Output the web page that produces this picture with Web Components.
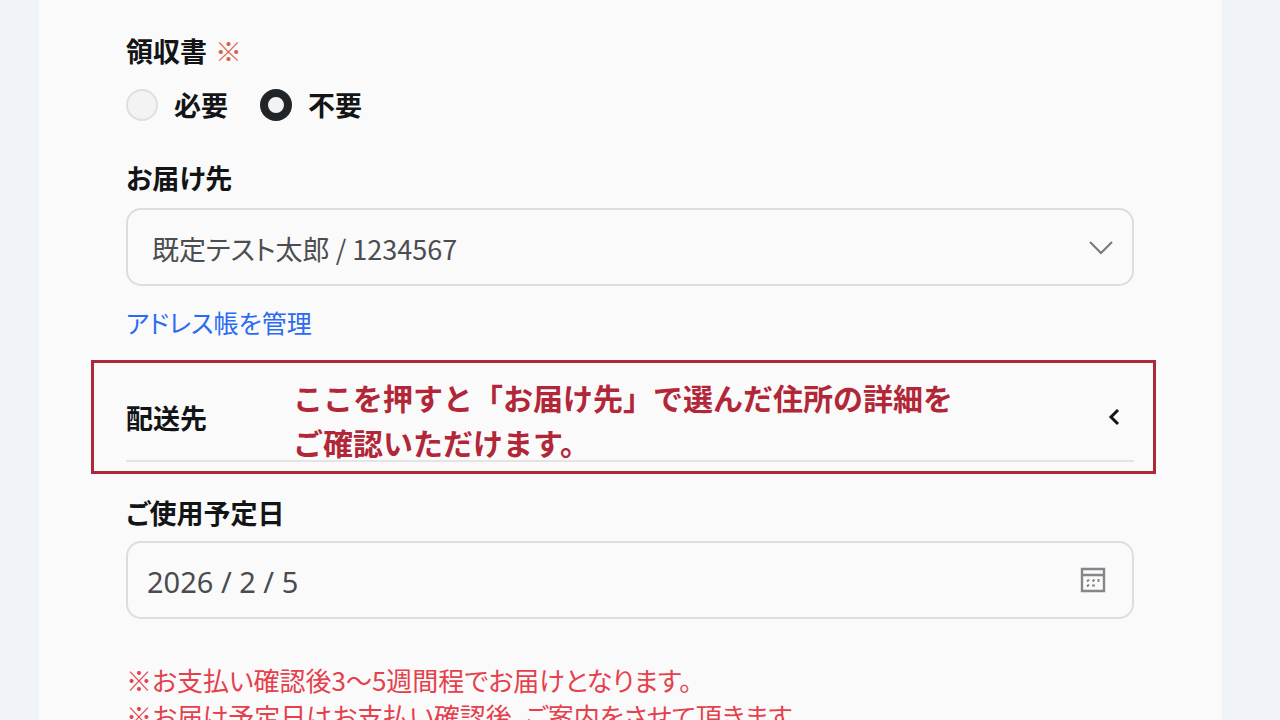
<!DOCTYPE html>
<html lang="ja">
<head>
<meta charset="utf-8">
<meta name="viewport" content="width=device-width, initial-scale=1">
<title>ご注文情報</title>
<style>
  body {
    margin: 0;
    background: #f0f4f9;
    color: #131416;
    font: 400 27px/36px "Noto Sans CJK JP", sans-serif;
    font-feature-settings: "palt";
  }
</style>
</head>
<body>
<order-form></order-form>

<script>
const define = (name, html) => {
  const template = document.createElement('template');
  template.innerHTML = html;
  customElements.define(name, class extends HTMLElement {
    constructor() {
      super();
      this.attachShadow({ mode: 'open' }).append(template.content.cloneNode(true));
    }
  });
};

define('radio-group', `
  <style>
    :host { display: block; }
    fieldset { margin: 0; padding: 0; border: 0; min-width: 0; }
    legend { padding: 0; font-weight: 700; line-height: 40px; }
    .mark { color: #d9604f; font-weight: 400; margin-left: 8px; }
    .options { display: flex; gap: 32px; margin-top: 18px; }
    label { display: flex; align-items: center; gap: 16px; height: 32px; font-weight: 700; }
    input {
      appearance: none; box-sizing: border-box; margin: 0;
      width: 32px; height: 32px; border-radius: 50%;
      border: 2px solid #dedfe1; background: #f3f3f3;
    }
    input:checked { border: 8px solid #222528; }
  </style>
  <fieldset>
    <legend>領収書<span class="mark">※</span></legend>
    <div class="options">
      <label><input type="radio" name="receipt" value="yes"><span>必要</span></label>
      <label><input type="radio" name="receipt" value="no" checked><span>不要</span></label>
    </div>
  </fieldset>
`);

define('address-select', `
  <style>
    :host { display: block; }
    label { display: block; font-weight: 700; line-height: 40px; }
    .box { display: grid; align-items: center; margin-top: 10px; }
    select, svg { grid-area: 1 / 1; }
    select {
      appearance: none; box-sizing: border-box; width: 100%; height: 78px;
      padding: 4px 72px 0 24px; border: 2px solid #dcdde0; border-radius: 15px;
      background: transparent; color: #4c4d50; font: inherit;
      font-feature-settings: inherit;
    }
    svg { justify-self: end; margin-right: 21px; pointer-events: none; }
    a {
      display: block; width: fit-content; margin-top: 16px;
      font-size: 25px; line-height: 40px; color: #2b6bf3; text-decoration: none;
    }
  </style>
  <label for="address">お届け先</label>
  <div class="box">
    <select id="address"><option>既定テスト太郎 / 1234567</option></select>
    <svg width="24" height="16" viewBox="0 0 24 16" fill="none" stroke="#77777c" stroke-width="2"><path d="M1 3 12 14 23 3"/></svg>
  </div>
  <a href="#address-book">アドレス帳を管理</a>
`);

define('detail-row', `
  <style>
    :host { display: block; position: relative; }
    button {
      box-sizing: border-box; width: 100%; height: 86px; margin: 0; padding: 0 13px 0 0;
      display: flex; align-items: center; justify-content: space-between;
      border: 0; border-bottom: 2px solid #e4e4e5; background: none;
      color: inherit; font: inherit; font-weight: 700; font-feature-settings: inherit;
    }
  </style>
  <button type="button" aria-expanded="false">
    <slot></slot>
    <svg width="14" height="18" viewBox="0 0 14 18" fill="none" stroke="#151515" stroke-width="3"><path d="M11 1 4 8 11 15"/></svg>
  </button>
  <slot name="hint"></slot>
`);

define('hint-frame', `
  <style>
    :host {
      position: absolute; inset: -16px -22px -12px -35px; box-sizing: border-box;
      border: 3px solid #ab2a3a; padding: 12px 0 0 199px; pointer-events: none;
      color: #b22738; font-size: 30px; font-weight: 700; line-height: 45px;
      font-feature-settings: normal;
    }
  </style>
  <slot></slot>
`);

define('date-field', `
  <style>
    :host { display: block; }
    label { display: block; font-weight: 700; line-height: 40px; }
    .box {
      box-sizing: border-box; display: flex; align-items: center; height: 78px;
      margin-top: 8px; padding: 0 26px 0 19px; border: 2px solid #dcdde0; border-radius: 15px;
    }
    input {
      flex: 1; min-width: 0; padding: 4px 0 0; border: 0; background: none; outline: none;
      color: #4a4b4f; font: 400 29px/36px "Noto Sans", sans-serif;
    }
    button { display: flex; padding: 0; border: 0; background: none; }
  </style>
  <label for="date">ご使用予定日</label>
  <div class="box">
    <input id="date" type="text" value="2026 / 2 / 5">
    <button type="button" aria-label="カレンダーを開く">
      <svg width="26" height="26" viewBox="0 0 26 26" fill="none" stroke="#85858a" stroke-width="2">
        <path stroke-width="2.4" d="M2 2H24V24H2ZM2 8H24"/>
        <path d="M7 14.500 9 12.500M12.500 14.500 14.500 12.500M18.500 12V15M7 19.500 9 17.500M12 18.500H15"/>
      </svg>
    </button>
  </div>
`);

define('order-form', `
  <style>
    :host { display: block; }
    main {
      box-sizing: border-box; min-height: 100vh; margin: 0 58px 0 39px;
      padding: 31px 88px 40px 87px; background: #fafafa;
    }
    address-select { margin-top: 37px; }
    detail-row { margin-top: 34px; }
    date-field { margin-top: 31px; }
    .notes { margin-top: 43px; color: #e5404c; font-size: 26px; }
    p { margin: 0; }
  </style>
  <main>
    <radio-group></radio-group>
    <address-select></address-select>
    <detail-row>配送先<hint-frame slot="hint">ここを押すと「お届け先」で選んだ住所の詳細を<br>ご確認いただけます。</hint-frame></detail-row>
    <date-field></date-field>
    <div class="notes">
      <p>※お支払い確認後3～5週間程でお届けとなります。</p>
      <p>※お届け予定日はお支払い確認後、ご案内をさせて頂きます。</p>
    </div>
  </main>
`);
</script>
</body>
</html>
